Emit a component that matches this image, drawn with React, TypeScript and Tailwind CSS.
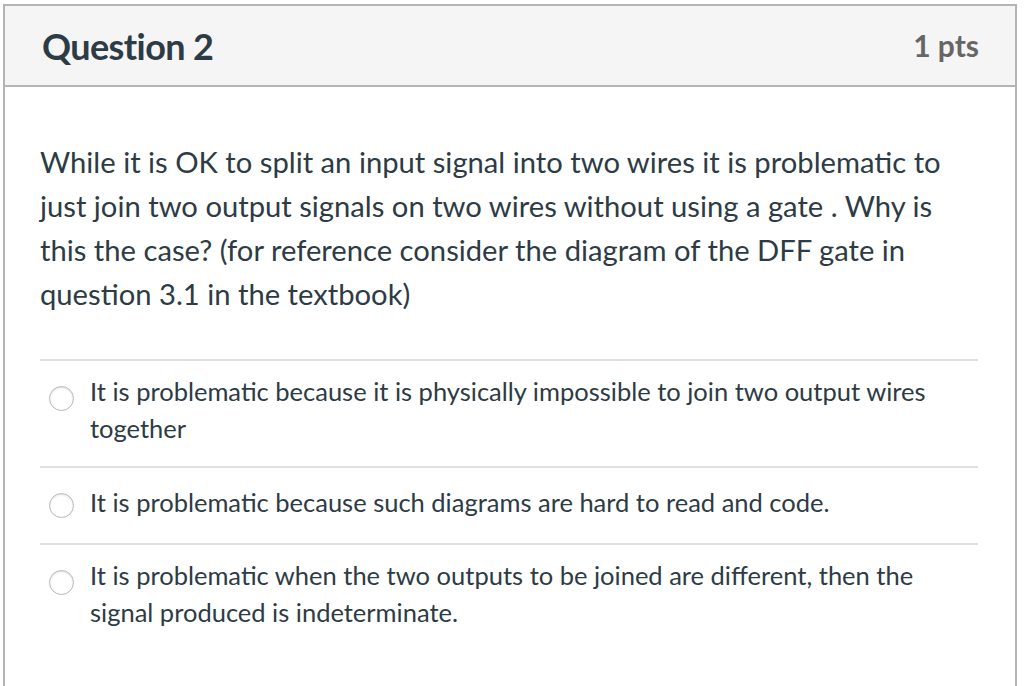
const options = [
  "It is problematic because it is physically impossible to join two output wires together",
  "It is problematic because such diagrams are hard to read and code.",
  "It is problematic when the two outputs to be joined are different, then the signal produced is indeterminate.",
];

function Radio() {
  return (
    <span className="mt-[13px] ml-[9px] block h-[25px] w-[25px] shrink-0 rounded-full border border-[#b9b9b9] bg-white shadow-[inset_0_1px_2px_rgba(0,0,0,0.12)]" />
  );
}

export default function App() {
  return (
    <div className="h-[686px] w-[1024px] overflow-hidden bg-white pl-[3px] pt-[4px] font-['Lato','Liberation_Sans',sans-serif] text-[#2d3b45]">
      <div className="h-[720px] w-[1014px] border-2 border-[#b4b4b4]">
        <div className="flex h-[81px] items-center justify-between border-b-2 border-[#b4b4b4] bg-[#f5f5f5] pl-[37px] pr-[36px]">
          <h2 className="text-[36px] font-bold tracking-[-0.6px]">Question 2</h2>
          <span className="text-[30px] font-bold text-[#666]">1 pts</span>
        </div>

        <div className="px-[35px] pt-[53px]">
          <p className="text-[29.2px] leading-[44px]">
            While it is OK to split an input signal into two wires it is
            problematic to just join two output signals on two wires without
            using a gate . Why is this the case? (for reference consider the
            diagram of the DFF gate in question 3.1 in the textbook)
          </p>

          <div className="mt-[43px] mr-[2px]">
            {options.map((text) => (
              <div
                key={text}
                className="flex items-start border-t-2 border-[#e0e0e0] pt-[12px] pb-[19px]"
              >
                <Radio />
                <div className="ml-[16px] flex min-h-[44px] items-center text-[25.5px] leading-[37px]">
                  {text}
                </div>
              </div>
            ))}
          </div>
        </div>
      </div>
    </div>
  );
}
